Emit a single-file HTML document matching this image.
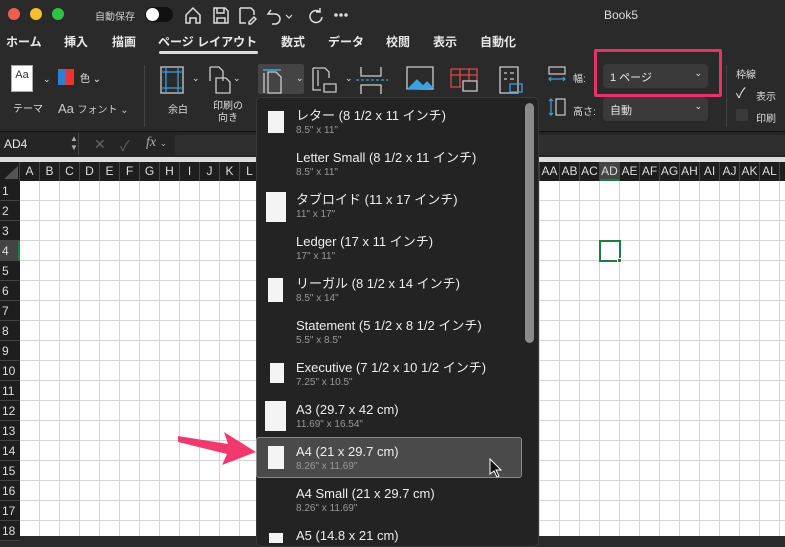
<!DOCTYPE html><html><head><meta charset="utf-8"><style>
*{margin:0;padding:0;box-sizing:border-box}
body{width:785px;height:536px;overflow:hidden;background:#2a2a2a;font-family:"Liberation Sans","Noto Sans CJK JP",sans-serif;color:#e8e8e8;position:relative}
.a{position:absolute;white-space:nowrap}
.grid{position:absolute;left:20px;top:181px;width:765px;height:355px;background-color:#fff;background-image:linear-gradient(90deg,#d4d4d4 1px,transparent 1px),linear-gradient(#d4d4d4 1px,transparent 1px);background-size:20px 20px;background-position:-1px -1px}
.ch{position:absolute;top:162px;height:19px;width:20px;background:#1e1e1e;border-right:1px solid #444;font-size:12px;text-align:center;line-height:19px;color:#ddd}
.rh{position:absolute;left:0;width:20px;height:20px;background:#1e1e1e;border-bottom:1px solid #444;font-size:12px;line-height:20px;padding-left:2px;color:#ddd}
.it{position:absolute;left:296px;font-size:13px;line-height:16px;color:#eee}
.sb{position:absolute;left:296px;font-size:10px;line-height:12px;color:#999}
.pg{position:absolute;background:#f4f4f4}
.tab{font-size:12px;font-weight:bold;top:33px}
.lbl{font-size:10px;color:#ddd}
</style></head><body>
<div class="a" style="left:8px;top:8px;width:12px;height:12px;border-radius:6px;background:#ec5f57"></div>
<div class="a" style="left:30px;top:8px;width:12px;height:12px;border-radius:6px;background:#f4bf2f"></div>
<div class="a" style="left:52px;top:8px;width:12px;height:12px;border-radius:6px;background:#2ec340"></div>
<div class="a" style="left:95px;top:8px;font-size:10px;color:#ccc">自動保存</div>
<div class="a" style="left:145px;top:7px;width:28px;height:15px;border-radius:8px;background:#111"></div>
<div class="a" style="left:146px;top:8px;width:13px;height:13px;border-radius:7px;background:#fff"></div>
<svg class="a" style="left:183px;top:4px" width="170" height="22" fill="none" stroke="#ddd" stroke-width="1.5"><path d="M3 11l7-7 7 7v8h-4v-5h-6v5h-4z"/><path d="M31 4h11l3 3v12h-14z M34 4v5h7V4 M34 19v-5h8v5"/><path d="M57 4h11l3 3v4 M57 4v15h6 M66 18l5-5 2 2-5 5h-2z"/><path d="M88 6l-3 4h7a5 5 0 0 1 0 10h-3"/><path d="M103 11l3 3 3-3" stroke-width="1.2"/><path d="M137 8a6 6 0 1 0 2 5 M137 4v4h-4"/><circle cx="153" cy="11" r="1" fill="#ddd"/><circle cx="158" cy="11" r="1" fill="#ddd"/><circle cx="163" cy="11" r="1" fill="#ddd"/></svg>
<div class="a" style="left:604px;top:8px;font-size:12px;color:#ddd">Book5</div>
<div class="a tab" style="left:6px">ホーム</div>
<div class="a tab" style="left:64px">挿入</div>
<div class="a tab" style="left:112px">描画</div>
<div class="a tab" style="left:158px">ページ レイアウト</div>
<div class="a" style="left:159px;top:51px;width:99px;height:3px;background:#ddd;border-radius:2px"></div>
<div class="a tab" style="left:281px">数式</div>
<div class="a tab" style="left:328px">データ</div>
<div class="a tab" style="left:386px">校閲</div>
<div class="a tab" style="left:433px">表示</div>
<div class="a tab" style="left:480px">自動化</div>
<div class="a" style="left:11px;top:65px;width:22px;height:27px;border:1px solid #aaa;background:#fff;color:#333;font-size:11px;text-align:center;line-height:18px">Aa</div>
<div class="a" style="left:43px;top:74px;font-size:9px">⌄</div>
<div class="a" style="left:58px;top:69px;width:16px;height:16px;background:linear-gradient(90deg,#2d7fd3 50%,#e33 50%)"></div>
<div class="a" style="left:80px;top:70px;font-size:10px">色 ⌄</div>
<div class="a lbl" style="left:13px;top:100px">テーマ</div>
<div class="a" style="left:58px;top:101px;font-size:13px;color:#ccc">Aa <span style="font-size:10px">フォント ⌄</span></div>
<div class="a" style="left:144px;top:65px;width:1px;height:62px;background:#444"></div>
<svg class="a" style="left:158px;top:64px" width="395" height="34" fill="none" stroke-width="1.3"><rect x="3" y="3" width="22" height="26" stroke="#ccc"/><path d="M3 8h22M3 24h22M8 3v26M20 3v26" stroke="#3ba0e0"/><path d="M52 3h9l4 4v10 M52 3v14 M58 14h10l4 4v11h-14z" stroke="#ccc"/><rect x="100" y="0" width="46" height="30" fill="#444" stroke="none" rx="2"/><path d="M105 6h18 M106 9v20 M110 8h8l5 5v16h-13z" stroke="#ccc"/><path d="M105 6h18" stroke="#3ba0e0"/><path d="M155 4h12l4 4v6 M155 4v22h8 M166 20h12v8h-12z M160 6v16" stroke="#ccc"/><path d="M203 3v9h20v-9 M203 30v-9h20v9" stroke="#ccc"/><path d="M198 16h32" stroke="#3ba0e0" stroke-dasharray="3 2"/><path d="M249 3h26v22h-26z" stroke="#ccc"/><path d="M250 25l9-9 6 6 4-4 6 6z" fill="#3ba0e0" stroke="#3ba0e0"/><path d="M293 5h26v12 M293 5v18h10 M293 11h26 M302 5v18 M311 5v12" stroke="#e04848"/><path d="M305 17h14v10h-14z" stroke="#ccc"/><path d="M342 3h18v26h-18z M346 9h3M346 15h3M352 9h4M352 15h4" stroke="#ccc"/><path d="M352 20h12v8h-12z" stroke="#3ba0e0"/></svg>
<div class="a" style="left:192px;top:73px;font-size:9px">⌄</div>
<div class="a" style="left:233px;top:73px;font-size:9px">⌄</div>
<div class="a" style="left:296px;top:73px;font-size:9px">⌄</div>
<div class="a" style="left:345px;top:73px;font-size:9px">⌄</div>
<div class="a lbl" style="left:168px;top:101px">余白</div>
<div class="a lbl" style="left:213px;top:101px;text-align:center;line-height:12px">印刷の<br>向き</div>
<svg class="a" style="left:548px;top:65px" width="20" height="56" fill="none" stroke="#ccc" stroke-width="1.2"><rect x="1" y="2" width="16" height="7"/><path d="M1 14h16M3 12l-2 2 2 2M15 12l2 2-2 2" stroke="#3ba0e0"/><rect x="8" y="34" width="9" height="16"/><path d="M3 34v16M1 36l2-2 2 2M1 48l2 2 2-2" stroke="#3ba0e0"/></svg>
<div class="a lbl" style="left:573px;top:70px">幅:</div>
<div class="a lbl" style="left:573px;top:103px">高さ:</div>
<div class="a" style="left:603px;top:64px;width:105px;height:24px;background:#3a3a3a;border-radius:4px;font-size:11px;padding:5px 7px">1 ページ<span style="position:absolute;right:6px;top:4px;font-size:9px">⌄</span></div>
<div class="a" style="left:603px;top:97px;width:105px;height:24px;background:#3a3a3a;border-radius:4px;font-size:11px;padding:5px 7px">自動<span style="position:absolute;right:6px;top:4px;font-size:9px">⌄</span></div>
<div class="a" style="left:594px;top:49px;width:128px;height:48px;border:3px solid #e8336a;border-radius:2px"></div>
<div class="a" style="left:726px;top:65px;width:1px;height:62px;background:#444"></div>
<div class="a lbl" style="left:736px;top:66px">枠線</div>
<div class="a" style="left:736px;top:83px;font-size:14px">✓</div>
<div class="a lbl" style="left:756px;top:88px">表示</div>
<div class="a" style="left:736px;top:109px;width:12px;height:12px;background:#3a3a3a;border-radius:2px"></div>
<div class="a lbl" style="left:756px;top:110px">印刷</div>
<div class="a" style="left:0;top:131px;width:785px;height:26px;background:#252525;border-top:1px solid #111"></div>
<div class="a" style="left:4px;top:137px;font-size:12px">AD4</div>
<div class="a" style="left:70px;top:134px;font-size:8px;line-height:9px;color:#aaa">▲<br>▼</div>
<div class="a" style="left:78px;top:133px;width:1px;height:22px;background:#444"></div>
<div class="a" style="left:94px;top:136px;font-size:14px;color:#666">✕</div>
<div class="a" style="left:120px;top:136px;font-size:14px;color:#666">✓</div>
<div class="a" style="left:146px;top:135px;font-size:14px;font-style:italic;font-family:'Liberation Serif',serif;color:#aaa">fx <span style="font-size:9px;font-style:normal">⌄</span></div>
<div class="a" style="left:175px;top:135px;width:610px;height:20px;background:#2f2f2f;border-radius:3px"></div>
<div class="a" style="left:0;top:157px;width:785px;height:5px;background:#ddd"></div>
<div class="a" style="left:0;top:162px;width:20px;height:19px;background:#1e1e1e;border-right:1px solid #444"></div>
<svg class="a" style="left:4px;top:166px" width="14" height="13"><path d="M14 0v13H0z" fill="#555"/></svg>
<div class="ch" style="left:20px">A</div><div class="ch" style="left:40px">B</div><div class="ch" style="left:60px">C</div><div class="ch" style="left:80px">D</div><div class="ch" style="left:100px">E</div><div class="ch" style="left:120px">F</div><div class="ch" style="left:140px">G</div><div class="ch" style="left:160px">H</div><div class="ch" style="left:180px">I</div><div class="ch" style="left:200px">J</div><div class="ch" style="left:220px">K</div><div class="ch" style="left:240px">L</div>
<div class="ch" style="left:260px;width:280px"></div>
<div class="ch" style="left:540px">AA</div><div class="ch" style="left:560px">AB</div><div class="ch" style="left:580px">AC</div><div class="ch" style="left:600px;background:#444;border-bottom:2px solid #1e7c45">AD</div><div class="ch" style="left:620px">AE</div><div class="ch" style="left:640px">AF</div><div class="ch" style="left:660px">AG</div><div class="ch" style="left:680px">AH</div><div class="ch" style="left:700px">AI</div><div class="ch" style="left:720px">AJ</div><div class="ch" style="left:740px">AK</div><div class="ch" style="left:760px">AL</div><div class="ch" style="left:780px">A</div>
<div class="grid"></div>
<div class="rh" style="top:181px">1</div><div class="rh" style="top:201px">2</div><div class="rh" style="top:221px">3</div><div class="rh" style="top:241px;background:#444;border-right:2px solid #1e7c45">4</div><div class="rh" style="top:261px">5</div><div class="rh" style="top:281px">6</div><div class="rh" style="top:301px">7</div><div class="rh" style="top:321px">8</div><div class="rh" style="top:341px">9</div><div class="rh" style="top:361px">10</div><div class="rh" style="top:381px">11</div><div class="rh" style="top:401px">12</div><div class="rh" style="top:421px">13</div><div class="rh" style="top:441px">14</div><div class="rh" style="top:461px">15</div><div class="rh" style="top:481px">16</div><div class="rh" style="top:501px">17</div><div class="rh" style="top:521px">18</div>
<div class="a" style="left:599px;top:240px;width:22px;height:22px;border:2px solid #1e7c45"></div>
<div class="a" style="left:617px;top:258px;width:5px;height:5px;background:#1e7c45;border:1px solid #fff"></div>
<div class="a" style="left:256px;top:97px;width:283px;height:450px;background:#232323;border:1px solid #3a3a3a;border-radius:5px"></div>
<div class="a" style="left:525px;top:103px;width:9px;height:240px;background:#8a8a8a;border-radius:5px"></div>
<div class="a" style="left:256px;top:437px;width:266px;height:41px;background:#4a4a4a;border:1px solid #888;border-radius:3px"></div>
<div class="pg" style="left:268px;top:111px;width:16px;height:22px"></div>
<div class="it" style="top:108px">レター (8 1/2 x 11 インチ)</div><div class="sb" style="top:125px">8.5" x 11"</div>
<div class="it" style="top:150px">Letter Small (8 1/2 x 11 インチ)</div><div class="sb" style="top:167px">8.5" x 11"</div>
<div class="pg" style="left:266px;top:192px;width:20px;height:30px"></div>
<div class="it" style="top:192px">タブロイド (11 x 17 インチ)</div><div class="sb" style="top:209px">11" x 17"</div>
<div class="it" style="top:234px">Ledger (17 x 11 インチ)</div><div class="sb" style="top:251px">17" x 11"</div>
<div class="pg" style="left:268px;top:278px;width:15px;height:24px"></div>
<div class="it" style="top:276px">リーガル (8 1/2 x 14 インチ)</div><div class="sb" style="top:293px">8.5" x 14"</div>
<div class="it" style="top:318px">Statement (5 1/2 x 8 1/2 インチ)</div><div class="sb" style="top:335px">5.5" x 8.5"</div>
<div class="pg" style="left:270px;top:363px;width:14px;height:20px"></div>
<div class="it" style="top:360px">Executive (7 1/2 x 10 1/2 インチ)</div><div class="sb" style="top:377px">7.25" x 10.5"</div>
<div class="pg" style="left:265px;top:401px;width:21px;height:30px"></div>
<div class="it" style="top:402px">A3 (29.7 x 42 cm)</div><div class="sb" style="top:419px">11.69" x 16.54"</div>
<div class="pg" style="left:268px;top:446px;width:16px;height:23px"></div>
<div class="it" style="top:444px">A4 (21 x 29.7 cm)</div><div class="sb" style="top:461px">8.26" x 11.69"</div>
<div class="it" style="top:486px">A4 Small (21 x 29.7 cm)</div><div class="sb" style="top:503px">8.26" x 11.69"</div>
<div class="pg" style="left:269px;top:533px;width:14px;height:10px"></div>
<div class="it" style="top:528px">A5 (14.8 x 21 cm)</div>
<svg class="a" style="left:488px;top:458px" width="14" height="20"><path d="M2 1v15l4-3 3 6 2-1-3-6h5z" fill="#111" stroke="#fff" stroke-width="1"/></svg>
<svg class="a" style="left:176px;top:425px" width="84" height="40"><path d="M2 11L52 19 48 7 80 27 46 40 51 29 2 17z" fill="#f03a6e"/></svg>
</body></html>
